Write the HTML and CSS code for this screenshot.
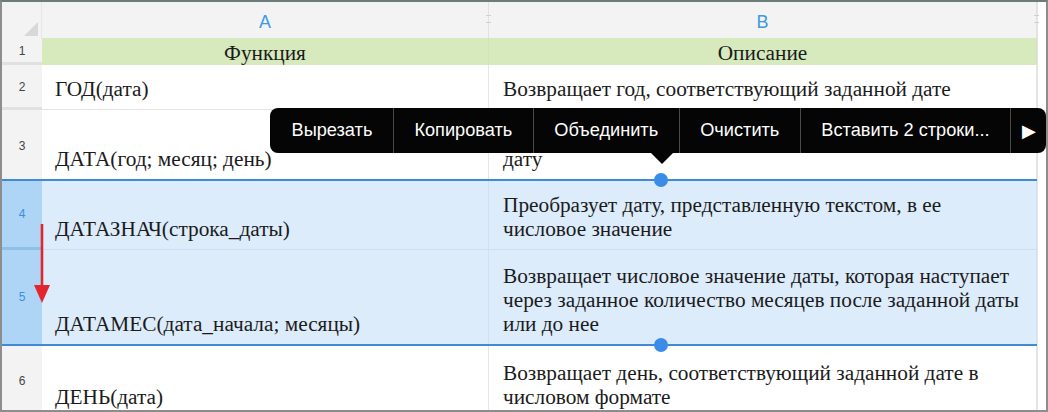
FILE: index.html
```html
<!DOCTYPE html>
<html lang="ru">
<head>
    <meta charset="UTF-8">
    <title>Функции даты</title>
    <link rel="stylesheet" href="styles.css">
</head>
<body>
    <div class="frame">
        <div class="sheet">
            <div class="row head-row">
                <div class="corner"></div>
                <div class="col-head">A<span class="grip"></span></div>
                <div class="col-head">B<span class="grip"></span></div>
            </div>
            <div class="row title-row">
                <div class="row-head">1</div>
                <div class="cell title">Функция</div>
                <div class="cell title">Описание</div>
            </div>
            <div class="row r2">
                <div class="row-head">2</div>
                <div class="cell">ГОД(дата)</div>
                <div class="cell desc">Возвращает год, соответствующий заданной дате</div>
            </div>
            <div class="row r3">
                <div class="row-head">3</div>
                <div class="cell">ДАТА(год; месяц; день)</div>
                <div class="cell desc">дату</div>
            </div>
            <div class="selection">
                <div class="row r4 sel">
                    <div class="row-head">4</div>
                    <div class="cell">ДАТАЗНАЧ(строка_даты)</div>
                    <div class="cell desc">Преобразует дату, представленную текстом, в ее<br>числовое значение</div>
                </div>
                <div class="row r5 sel">
                    <div class="row-head">5</div>
                    <div class="cell">ДАТАМЕС(дата_начала; месяцы)</div>
                    <div class="cell desc">Возвращает числовое значение даты, которая наступает<br>через заданное количество месяцев после заданной даты<br>или до нее</div>
                </div>
                <span class="handle top"></span>
                <span class="handle bottom"></span>
            </div>
            <div class="row r6">
                <div class="row-head">6</div>
                <div class="cell">ДЕНЬ(дата)</div>
                <div class="cell desc">Возвращает день, соответствующий заданной дате в<br>числовом формате</div>
            </div>
        </div>
        <div class="edge"></div>

        <div class="menu">
            <div class="menu-item">Вырезать</div>
            <div class="menu-item">Копировать</div>
            <div class="menu-item">Объединить</div>
            <div class="menu-item">Очистить</div>
            <div class="menu-item">Вставить 2 строки...</div>
            <div class="menu-item more">&#9654;</div>
        </div>

        <svg class="drag-arrow" viewBox="0 0 20 80" width="20" height="80">
            <line x1="10" y1="0" x2="10" y2="64" stroke="#e3262e" stroke-width="2.6"/>
            <polygon points="2,61 18,61 10,79" fill="#e3262e"/>
        </svg>
    </div>
</body>
</html>
```

FILE: styles.css
```css
body {
    margin: 0;
    background: #fff;
}
.frame {
    position: relative;
    width: 1048px;
    height: 412px;
    box-sizing: border-box;
    border: 2px solid #8d8d8d;
    border-top-color: #6d7b7b;
    display: flex;
    overflow: hidden;
    background: #fff;
}
.sheet {
    width: 1035px;
    flex-shrink: 0;
}
.edge {
    flex: 1;
    border-left: 1px solid #e4e4e4;
    background: #fff;
}
.row {
    display: grid;
    grid-template-columns: 40px 447px 548px;
    font-family: "Liberation Serif", serif;
    font-size: 21.3px;
    color: #1b1b1b;
}
.head-row {
    height: 36px;
    background: #f3f3f3;
    font-family: "Liberation Sans", sans-serif;
}
.corner {
    position: relative;
    border-right: 1px solid #e6e6e6;
}
.corner::after {
    content: "";
    position: absolute;
    right: 3px;
    bottom: 2px;
    border-left: 14px solid transparent;
    border-bottom: 14px solid #d8d8d8;
}
.col-head {
    position: relative;
    display: flex;
    align-items: center;
    justify-content: center;
    padding-top: 4px;
    font-size: 18px;
    color: #3f9ae2;
    border-right: 1px solid #e2e2e2;
}
.grip {
    position: absolute;
    right: -3px;
    top: 13px;
    width: 5px;
    height: 6px;
    border-top: 1px solid #cfcfcf;
    border-bottom: 1px solid #cfcfcf;
}
.row-head {
    display: flex;
    align-items: center;
    justify-content: center;
    background: #f3f3f3;
    border-bottom: 3px solid #e1e1e1;
    font-family: "Liberation Sans", sans-serif;
    font-size: 12px;
    color: #444;
    box-sizing: border-box;
}
.cell {
    display: flex;
    align-items: flex-end;
    padding: 0 14px 8px 13px;
    line-height: 24px;
    border-bottom: 1px solid #e4e4e4;
    border-right: 1px solid #e6e6e6;
    white-space: nowrap;
}
.cell.desc {
    padding-left: 14px;
}
.title-row {
    height: 27px;
}
.title-row .row-head {
    padding-top: 2px;
}
.cell.title {
    background: #d6eabd;
    justify-content: center;
    align-items: center;
    padding: 2px 0 0;
    border-bottom: none;
    border-right-color: #d2e3bd;
}
.r2 { height: 45px; }
.r3 { height: 69px; }
.r4 { height: 69px; }
.r5 { height: 94px; }
.r6 { height: 70px; }
.r6 .cell { padding-bottom: 6px; }
.r2 .row-head, .r3 .row-head, .r6 .row-head {
    padding-top: 2px;
}

/* selected rows 4-5 */
.selection {
    position: relative;
    border-top: 2px solid #3f8ad6;
    border-bottom: 2px solid #3f8ad6;
}
.r3 .cell, .r3 .row-head {
    border-bottom: none;
}
.sel .cell {
    background: #dcecfb;
    border-bottom-color: #cadff2;
    border-right-color: #cfe2f3;
}
.sel .row-head {
    background: #aed5f6;
    color: #3b8fdc;
    border-bottom-color: #8fc0e8;
}
.r5 .cell, .r5 .row-head {
    border-bottom: none;
}
.handle {
    position: absolute;
    left: 652px;
    width: 14px;
    height: 14px;
    border-radius: 50%;
    background: #3b8ce8;
}
.handle.top { top: -8px; }
.handle.bottom { bottom: -8px; }

/* context menu */
.menu {
    position: absolute;
    left: 268px;
    top: 106px;
    width: 776px;
    height: 45px;
    display: flex;
    background: #050505;
    border-radius: 8px;
    font-family: "Liberation Sans", sans-serif;
    font-size: 18.2px;
    color: #fff;
}
.menu::after {
    content: "";
    position: absolute;
    left: 381px;
    top: 45px;
    border-left: 11px solid transparent;
    border-right: 11px solid transparent;
    border-top: 11px solid #050505;
}
.menu-item {
    display: flex;
    align-items: center;
    padding: 0 20.5px;
    border-right: 1px solid #4a4a4a;
    white-space: nowrap;
}
.menu-item:first-child {
    padding-left: 21.5px;
}
.menu-item.more {
    flex: 1;
    justify-content: center;
    padding: 0;
    border-right: none;
    font-size: 18px;
}
.drag-arrow {
    position: absolute;
    left: 30px;
    top: 222px;
}
```
